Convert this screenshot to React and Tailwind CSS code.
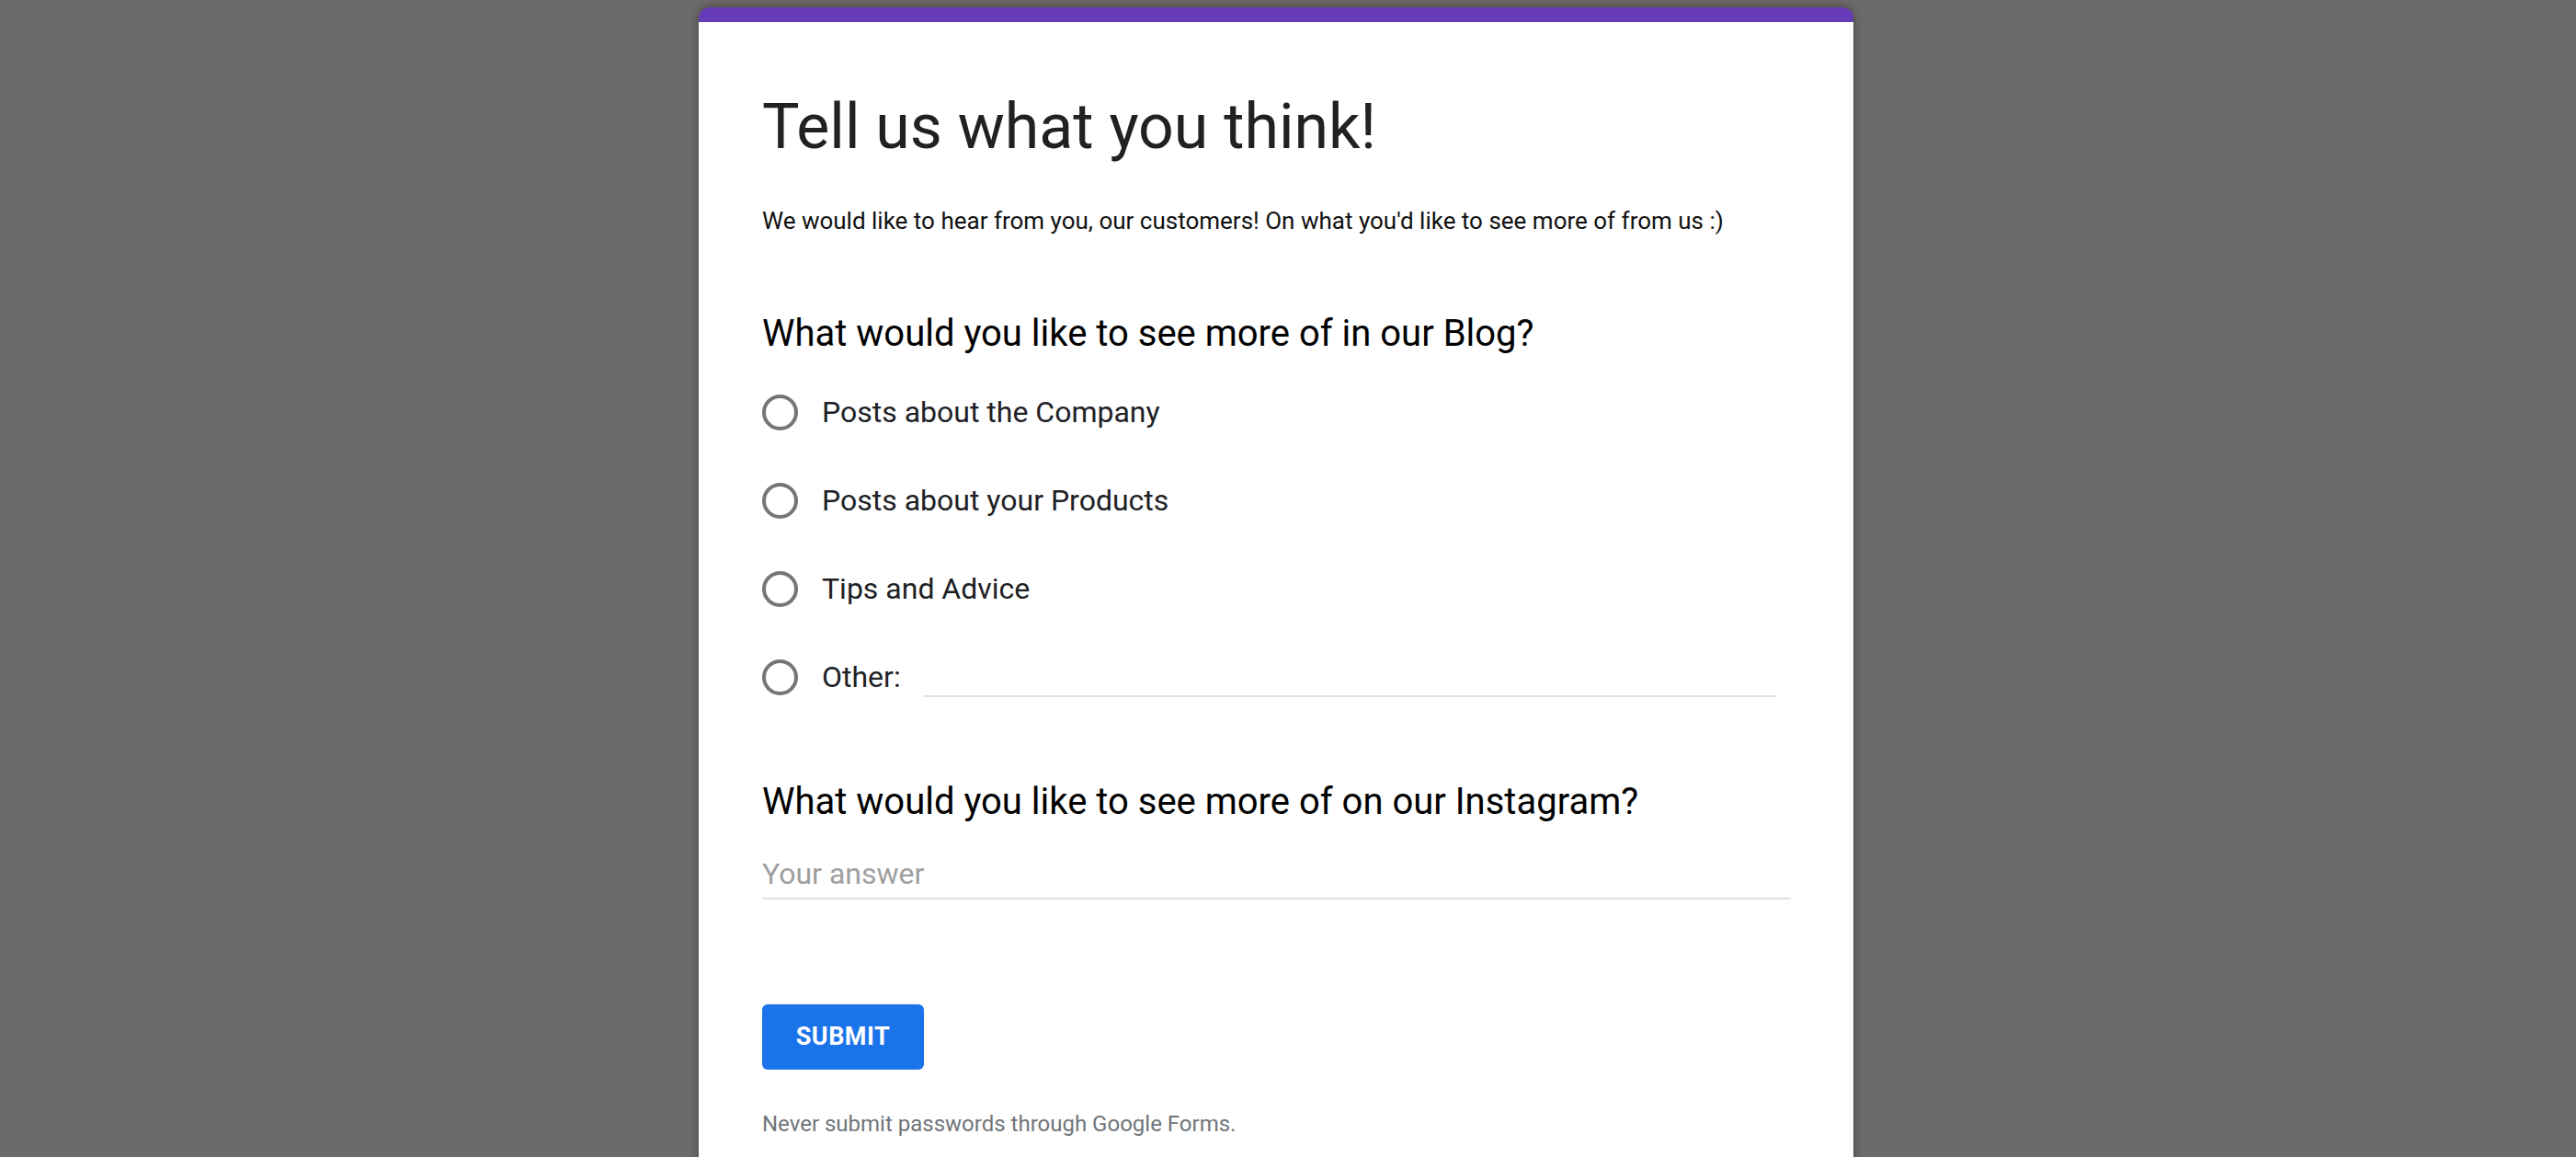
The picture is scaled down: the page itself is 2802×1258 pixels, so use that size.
const options = ['Posts about the Company', 'Posts about your Products', 'Tips and Advice'];

function Radio() {
  return <div className="w-[39px] h-[39px] shrink-0 rounded-full border-[4px] border-[#767676]" />;
}

export default function App() {
  return (
    <div className="min-h-screen bg-[#6b6a68] flex justify-center font-['Roboto','Noto_Sans',sans-serif]">
      <div className="w-[1256px] mt-[8px] mr-[26px] bg-white rounded-t-[12px] border-t-[16px] border-[#673ab7] shadow-[0_0_10px_rgba(0,0,0,0.35)] pl-[69px] pr-[68px] pt-[74px] pb-[60px]">
        <h1 className="text-[68px] leading-[80px] text-[#212121] font-normal">Tell us what you think!</h1>
        <p className="mt-[46px] text-[26px] leading-[32px] text-[#111]">
          We would like to hear from you, our customers! On what you'd like to see more of from us :)
        </p>

        <h2 className="mt-[83px] text-[40px] leading-[48px] text-black">What would you like to see more of in our Blog?</h2>
        <div className="mt-[13px] flex flex-col">
          {options.map((opt) => (
            <div key={opt} className="h-[96px] flex items-center">
              <Radio />
              <span className="ml-[26px] text-[32px] leading-[40px] text-[#202124]">{opt}</span>
            </div>
          ))}
          <div className="h-[96px] flex items-center">
            <Radio />
            <span className="ml-[26px] text-[32px] leading-[40px] text-[#202124]">Other:</span>
            <div className="ml-[24px] mr-[16px] flex-1 h-[44px] border-b-2 border-[#e0e0e0]" />
          </div>
        </div>

        <h2 className="mt-[64px] text-[40px] leading-[48px] text-black">What would you like to see more of on our Instagram?</h2>
        <div className="mt-[34px] pb-[6px] border-b-2 border-[#e0e0e0] text-[32px] leading-[40px] text-[#9e9e9e]">
          Your answer
        </div>

        <button className="mt-[114px] w-[176px] h-[71px] rounded-[6px] bg-[#1a73e8] text-white text-[27px] font-bold tracking-[0.5px]">
          SUBMIT
        </button>
        <p className="mt-[43px] text-[24px] leading-[32px] text-[#70757a]">Never submit passwords through Google Forms.</p>
      </div>
    </div>
  );
}
